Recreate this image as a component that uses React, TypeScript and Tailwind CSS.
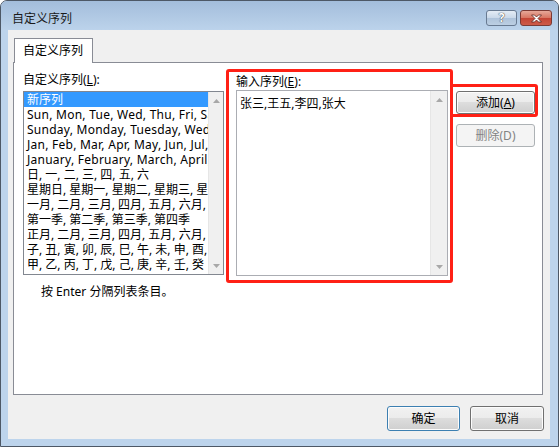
const font = "font-['Segoe_UI','Noto_Sans','Noto_Sans_CJK_SC',sans-serif]";

const rows = [
  "新序列",
  "Sun, Mon, Tue, Wed, Thu, Fri, Sat",
  "Sunday, Monday, Tuesday, Wednesday, Thursday, Friday, Saturday",
  "Jan, Feb, Mar, Apr, May, Jun, Jul, Aug, Sep, Oct, Nov, Dec",
  "January, February, March, April, May, June, July, August, September, October, November, December",
  "日, 一, 二, 三, 四, 五, 六",
  "星期日, 星期一, 星期二, 星期三, 星期四, 星期五, 星期六",
  "一月, 二月, 三月, 四月, 五月, 六月, 七月, 八月, 九月, 十月, 十一月, 十二月",
  "第一季, 第二季, 第三季, 第四季",
  "正月, 二月, 三月, 四月, 五月, 六月, 七月, 八月, 九月, 十月, 冬月, 腊月",
  "子, 丑, 寅, 卯, 辰, 巳, 午, 未, 申, 酉, 戌, 亥",
  "甲, 乙, 丙, 丁, 戊, 己, 庚, 辛, 壬, 癸",
];

const ScrollBar = () => (
  <div className="flex-1 flex flex-col justify-between bg-[#f0f0f0] border-l border-[#e6e6e6]">
    <div className="h-[17px] flex items-center justify-center">
      <svg width="7" height="4" viewBox="0 0 7 4"><path d="M3.5 0 L7 4 L0 4 Z" fill="#a8a8a8" /></svg>
    </div>
    <div className="h-[17px] flex items-center justify-center">
      <svg width="7" height="4" viewBox="0 0 7 4"><path d="M0 0 L7 0 L3.5 4 Z" fill="#a8a8a8" /></svg>
    </div>
  </div>
);

const btn =
  "flex items-center justify-center rounded-[3px] border bg-[linear-gradient(to_bottom,#f2f2f2_0%,#ebebeb_50%,#dddddd_50%,#cfcfcf_100%)] shadow-[inset_0_0_0_1px_#fcfcfc] leading-[14px]";

const App = () => {
  return (
    <div className={`w-[559px] h-[447px] bg-white text-[12px] text-black ${font}`}>
      <div className="w-[559px] h-[447px] border border-[#4d5866] rounded-t-[7px] bg-[#bdd4ec] flex flex-col overflow-hidden">
        {/* title bar */}
        <div className="h-[29px] shrink-0 bg-[linear-gradient(to_bottom,#a3bddb,#bcd3eb)] flex items-start">
          <div className="ml-[11px] mt-[10px] leading-[15px] text-[#1a1a1a]">自定义序列</div>
          <div className="ml-auto mt-[9px] mr-[6px] flex gap-[3px]">
            <div className="w-[31px] h-[16px] rounded-[3px] border border-[#687a91] bg-[linear-gradient(to_bottom,#e4ecf5_0%,#c9d8e9_50%,#aec3da_51%,#bccfe3_100%)] flex items-center justify-center">
              <span className="text-white font-bold text-[12px] leading-[12px] [text-shadow:0_0_1px_#333,0_0_1px_#333]">?</span>
            </div>
            <div className="w-[32px] h-[16px] rounded-[3px] border border-[#7b3a34] bg-[linear-gradient(to_bottom,#e6a899_0%,#d87663_48%,#c44535_52%,#cd5a48_100%)] flex items-center justify-center">
              <svg width="13" height="9" viewBox="0 0 13 9">
                <path d="M1.5 1 L4.5 1 L6.5 3 L8.5 1 L11.5 1 L8 4.5 L11.5 8 L8.5 8 L6.5 6 L4.5 8 L1.5 8 L5 4.5 Z" fill="#fff" stroke="#5a2520" strokeWidth="0.8" strokeLinejoin="round" />
              </svg>
            </div>
          </div>
        </div>

        {/* client area */}
        <div className="ml-[7px] w-[542px] h-[409px] shrink-0 bg-[#f0f0f0] flex flex-col">
          <div className="relative z-10 mt-[8px] ml-[6px] w-[79px] h-[25px] bg-white border border-b-0 border-[#898c95] pl-[8px] pt-[4px] leading-[15px]">
            自定义序列
          </div>
          <div className="-mt-px ml-[5px] w-[530px] h-[333px] bg-white border border-[#898c95] flex items-start">
            {/* left column */}
            <div className="ml-[9px] mt-[10px] w-[201px] flex flex-col">
              <div className="h-[14px] leading-[14px]">
                自定义序列(<span className="underline">L</span>):
              </div>
              <div className="mt-[4px] h-[184px] border border-[#828790] flex">
                <div className="w-[184px] overflow-hidden">
                  {rows.map((r, i) => (
                    <div
                      key={i}
                      className={`h-[15px] leading-[15px] pl-[3px] whitespace-nowrap overflow-hidden ${i === 0 ? "bg-[#3399ff] text-white" : ""} ${i >= 1 && i <= 4 ? "tracking-[0.25px]" : ""}`}
                    >
                      {r}
                    </div>
                  ))}
                </div>
                <ScrollBar />
              </div>
              <div className="mt-[10px] ml-[18px] h-[14px] leading-[14px] whitespace-nowrap">按 Enter 分隔列表条目。</div>
            </div>

            {/* input sequence */}
            <div className="ml-[2px] mt-[6px] w-[227px] h-[214px] border-[3px] border-[#ff2015] rounded-[3px] pl-[7px] pt-[3px] flex flex-col">
              <div className="h-[14px] leading-[14px]">
                输入序列(<span className="underline">E</span>):
              </div>
              <div className="mt-[1px] w-[212px] h-[186px] border border-[#abadb3] flex">
                <div className="w-[193px] pl-[3px] pt-[5px] leading-[15px] whitespace-nowrap">张三,王五,李四,张大</div>
                <ScrollBar />
              </div>
            </div>

            {/* right buttons */}
            <div className="-ml-[3px] mt-[21px] flex flex-col">
              <div className="w-[88px] h-[33px] border-[3px] border-[#ff2015] rounded-[3px] pt-[4px] pl-[3px]">
                <div className={`${btn} w-[79px] h-[23px] border-[#707070]`}>
                  添加(<span className="underline">A</span>)
                </div>
              </div>
              <div className="mt-[7px] ml-[6px] w-[79px] h-[23px] rounded-[3px] border border-[#adb2b5] bg-[#f4f4f4] text-[#838383] flex items-center justify-center leading-[14px]">
                删除(D)
              </div>
            </div>
          </div>

          {/* bottom buttons */}
          <div className="mt-[11px] mr-[6px] flex justify-end gap-[10px]">
            <div className={`${btn} w-[73px] h-[25px] border-[#3c7fb1] shadow-[inset_0_0_0_1px_#8fd8fb]`}>确定</div>
            <div className={`${btn} w-[74px] h-[25px] border-[#707070]`}>取消</div>
          </div>
        </div>
      </div>
    </div>
  );
};

export default App;
